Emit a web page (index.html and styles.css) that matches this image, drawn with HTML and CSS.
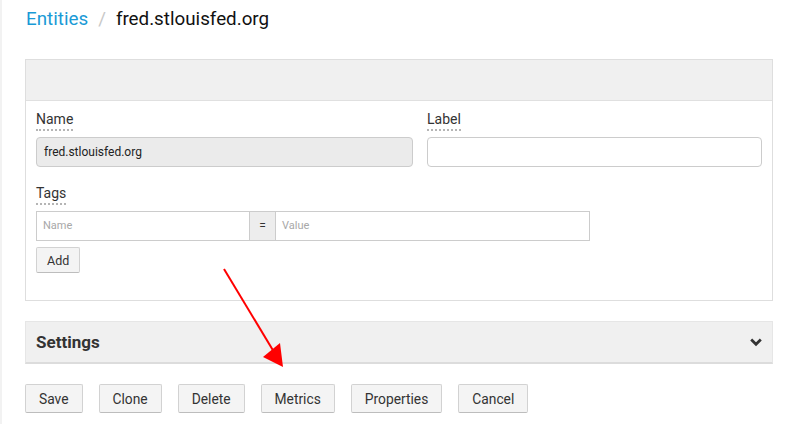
FILE: index.html
```html
<!DOCTYPE html>
<html lang="en">
<head>
<meta charset="utf-8">
<title>fred.stlouisfed.org</title>
<link rel="stylesheet" href="styles.css">
</head>
<body>
<div class="page">
  <nav class="breadcrumb">
    <a class="crumb-link" href="#">Entities</a>
    <span class="crumb-sep">/</span>
    <span class="crumb-current">fred.stlouisfed.org</span>
  </nav>

  <section class="panel">
    <div class="panel-head"></div>
    <div class="panel-body">
      <div class="row">
        <div class="field">
          <span class="label">Name</span>
          <div class="input input-readonly">fred.stlouisfed.org</div>
        </div>
        <div class="field">
          <span class="label">Label</span>
          <div class="input"></div>
        </div>
      </div>
      <div class="field tags">
        <span class="label">Tags</span>
        <div class="tag-group">
          <div class="tag-input tag-name">Name</div>
          <div class="tag-eq">=</div>
          <div class="tag-input tag-value">Value</div>
        </div>
        <div class="add-row"><button class="btn btn-small">Add</button></div>
      </div>
    </div>
  </section>

  <section class="collapse">
    <span class="collapse-title">Settings</span>
    <svg class="chevron" width="12" height="9" viewBox="0 0 12 9"><path d="M1.2 1.6 L6 6.2 L10.8 1.6" fill="none" stroke="#333" stroke-width="2.8" stroke-linejoin="miter"/></svg>
  </section>

  <div class="actions">
    <button class="btn">Save</button>
    <button class="btn">Clone</button>
    <button class="btn">Delete</button>
    <button class="btn">Metrics</button>
    <button class="btn">Properties</button>
    <button class="btn">Cancel</button>
  </div>
</div>

<svg class="arrow" width="786" height="424" viewBox="0 0 786 424">
  <line x1="224" y1="269" x2="274" y2="352" stroke="#ff0000" stroke-width="2"/>
  <polygon points="283,367 263,357 280,343" fill="#ff0000"/>
</svg>
</body>
</html>
```
FILE: styles.css
```css
* { box-sizing: border-box; }
html, body { margin: 0; padding: 0; background: #fff; }
body {
  font-family: Roboto, "Liberation Sans", sans-serif;
  color: #333;
  border-left: 2px solid #f2f2f2;
  min-height: 424px;
  position: relative;
}
.page {
  padding: 0 13px 0 23px;
}
.breadcrumb {
  height: 37px;
  display: flex;
  align-items: center;
  font-size: 18.8px;
  margin-bottom: 22px;
  padding-left: 1px;
}
.crumb-link { color: #1a9ad6; text-decoration: none; }
.crumb-sep { color: #c8c8c8; margin: 0 10px 0 10px; }
.crumb-current { color: #111; }

.panel {
  border: 1px solid #dedede;
}
.panel-head {
  height: 41px;
  background: #f0f0f0;
  border-bottom: 1px solid #e0e0e0;
}
.panel-body {
  padding: 9px 10px 27px 10px;
}
.row {
  display: flex;
  gap: 14px;
}
.row .field:first-child { flex: 0 0 377px; }
.row .field:last-child { flex: 1; }
.field {
  display: flex;
  flex-direction: column;
  align-items: flex-start;
}
.label {
  display: inline-block;
  font-size: 14px;
  line-height: 19px;
  color: #333;
  border-bottom: 2px dotted #b5b5b5;
  margin-bottom: 6px;
}
.input {
  width: 100%;
  height: 30px;
  border: 1px solid #ccc;
  border-radius: 4px;
  background: #fff;
  font-size: 12px;
  line-height: 28px;
  padding: 0 7px;
  color: #222;
}
.input-readonly { background: #ebebeb; }
.tags { margin-top: 17px; }
.tag-group {
  display: flex;
  width: 554px;
  height: 30px;
  border: 1px solid #ccc;
}
.tag-input {
  font-size: 11px;
  line-height: 28px;
  color: #a8a8a8;
  padding: 0 6px;
}
.tag-name { width: 213px; border-right: 1px solid #ccc; }
.tag-eq {
  width: 26px;
  background: #ededed;
  border-right: 1px solid #ccc;
  text-align: center;
  font-size: 12px;
  line-height: 28px;
  color: #333;
}
.tag-value { flex: 1; }
.add-row {
  display: flex;
  margin-top: 6px;
}

.btn {
  font-family: Roboto, "Liberation Sans", sans-serif;
  background: #f4f4f4;
  border: 1px solid #d2d2d2;
  border-bottom-color: #bdbdbd;
  border-radius: 2px;
  color: #333;
  font-size: 13.8px;
  height: 29px;
  padding: 0 13px;
  margin: 0;
}
.btn-small {
  font-size: 12.5px;
  height: 26px;
  padding: 0 10px;
}

.collapse {
  margin-top: 20px;
  height: 43px;
  background: #f0f0f0;
  border: 1px solid #e6e6e6;
  border-bottom: 2px solid #dcdcdc;
  display: flex;
  align-items: center;
  justify-content: space-between;
  padding: 0 10px 0 10px;
}
.collapse-title {
  font-size: 17px;
  font-weight: bold;
  color: #333;
}
.chevron { display: block; }

.actions {
  margin-top: 20px;
  display: flex;
  gap: 16px;
}

.arrow {
  position: absolute;
  left: -2px;
  top: 0;
  pointer-events: none;
}
```
